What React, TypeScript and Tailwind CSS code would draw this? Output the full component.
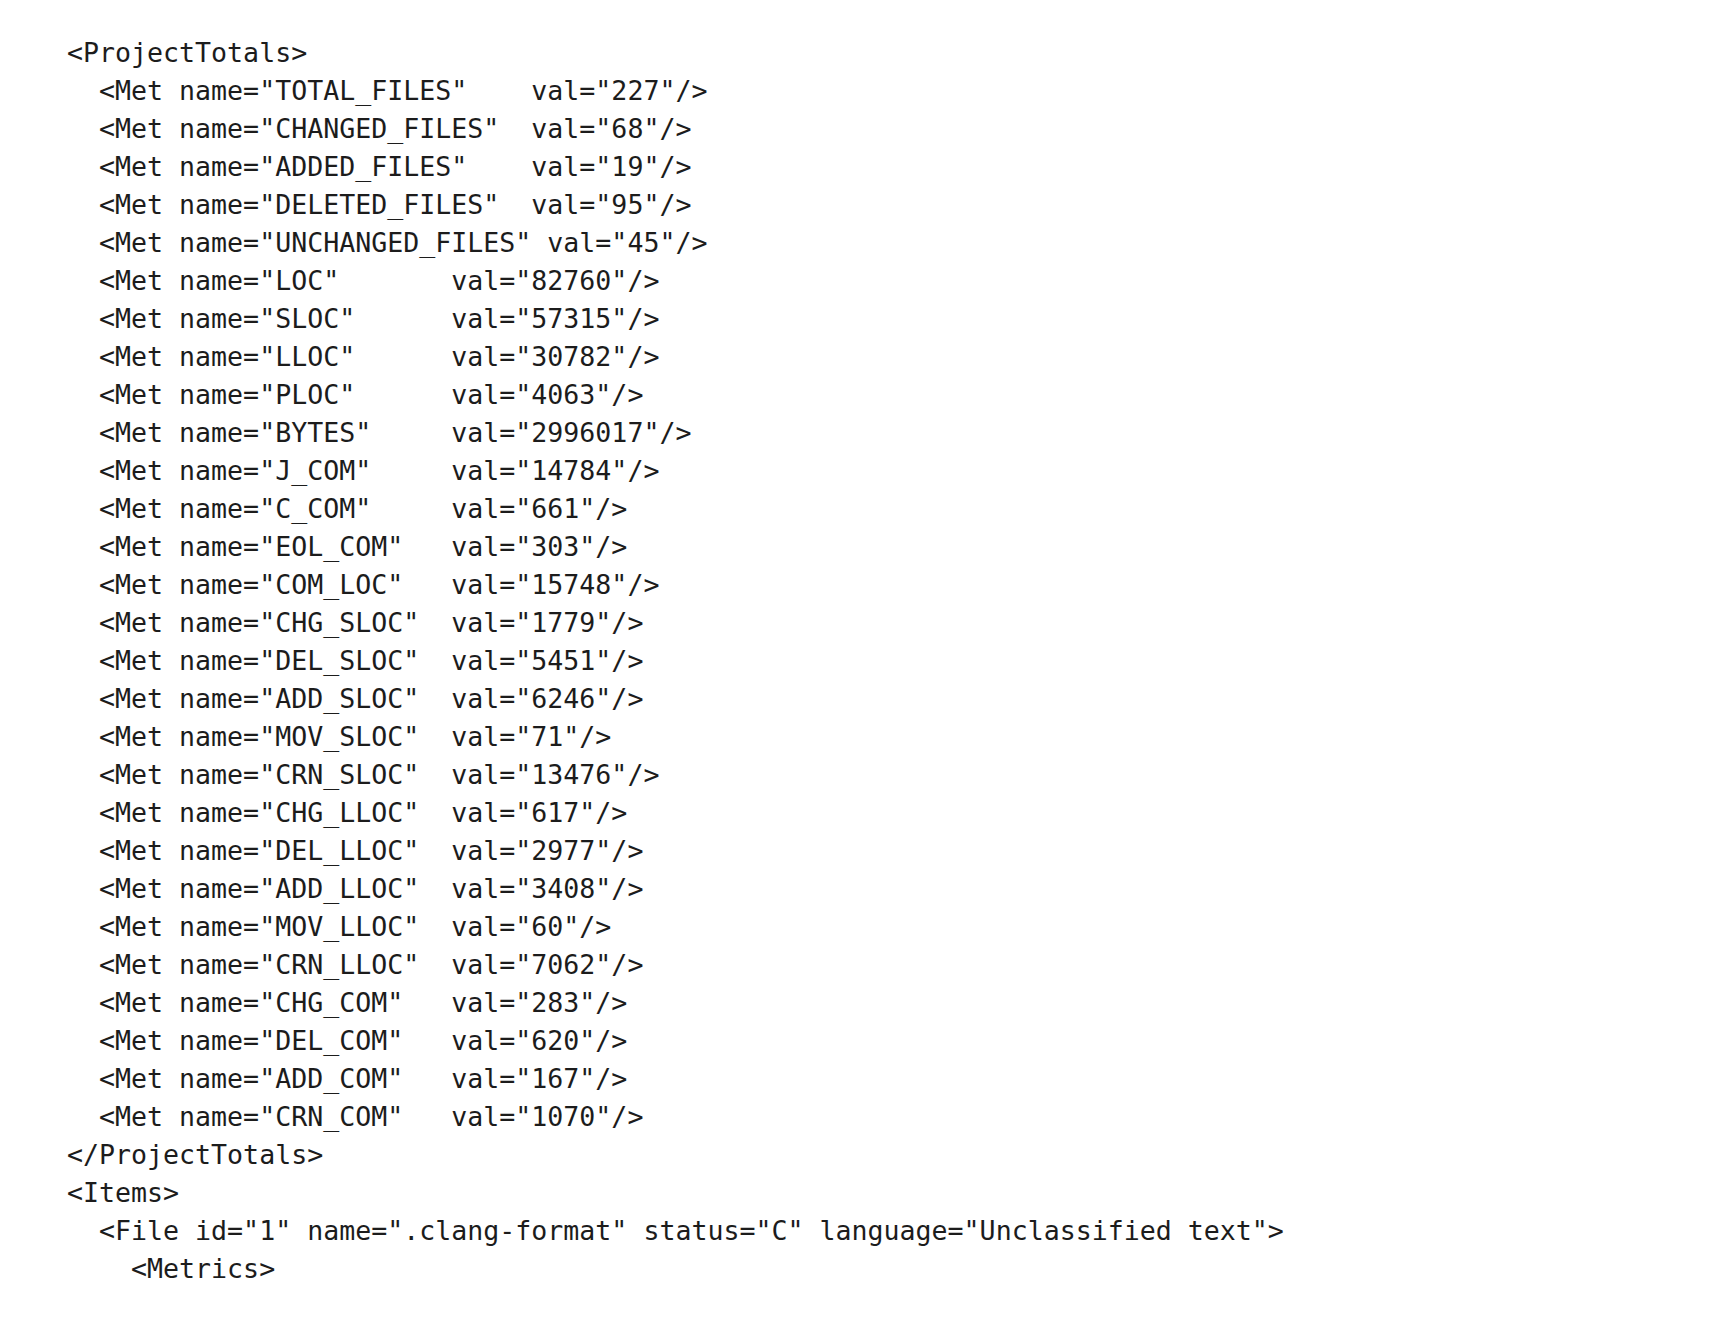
import React from 'react';

const lines = [
  '<ProjectTotals>',
  '  <Met name="TOTAL_FILES"    val="227"/>',
  '  <Met name="CHANGED_FILES"  val="68"/>',
  '  <Met name="ADDED_FILES"    val="19"/>',
  '  <Met name="DELETED_FILES"  val="95"/>',
  '  <Met name="UNCHANGED_FILES" val="45"/>',
  '  <Met name="LOC"       val="82760"/>',
  '  <Met name="SLOC"      val="57315"/>',
  '  <Met name="LLOC"      val="30782"/>',
  '  <Met name="PLOC"      val="4063"/>',
  '  <Met name="BYTES"     val="2996017"/>',
  '  <Met name="J_COM"     val="14784"/>',
  '  <Met name="C_COM"     val="661"/>',
  '  <Met name="EOL_COM"   val="303"/>',
  '  <Met name="COM_LOC"   val="15748"/>',
  '  <Met name="CHG_SLOC"  val="1779"/>',
  '  <Met name="DEL_SLOC"  val="5451"/>',
  '  <Met name="ADD_SLOC"  val="6246"/>',
  '  <Met name="MOV_SLOC"  val="71"/>',
  '  <Met name="CRN_SLOC"  val="13476"/>',
  '  <Met name="CHG_LLOC"  val="617"/>',
  '  <Met name="DEL_LLOC"  val="2977"/>',
  '  <Met name="ADD_LLOC"  val="3408"/>',
  '  <Met name="MOV_LLOC"  val="60"/>',
  '  <Met name="CRN_LLOC"  val="7062"/>',
  '  <Met name="CHG_COM"   val="283"/>',
  '  <Met name="DEL_COM"   val="620"/>',
  '  <Met name="ADD_COM"   val="167"/>',
  '  <Met name="CRN_COM"   val="1070"/>',
  '</ProjectTotals>',
  '<Items>',
  '  <File id="1" name=".clang-format" status="C" language="Unclassified text">',
  '    <Metrics>',
];

const App: React.FC = () => {
  return (
    <div className="min-h-screen w-full bg-white">
      <pre className="m-0 pl-[67px] pt-[34px] font-['DejaVu_Sans_Mono',monospace] text-[26.6px] leading-[38px] text-[#1c1c1c] whitespace-pre">
        {lines.map((line, i) => (
          <div key={i}>{line}</div>
        ))}
      </pre>
    </div>
  );
};

export default App;
